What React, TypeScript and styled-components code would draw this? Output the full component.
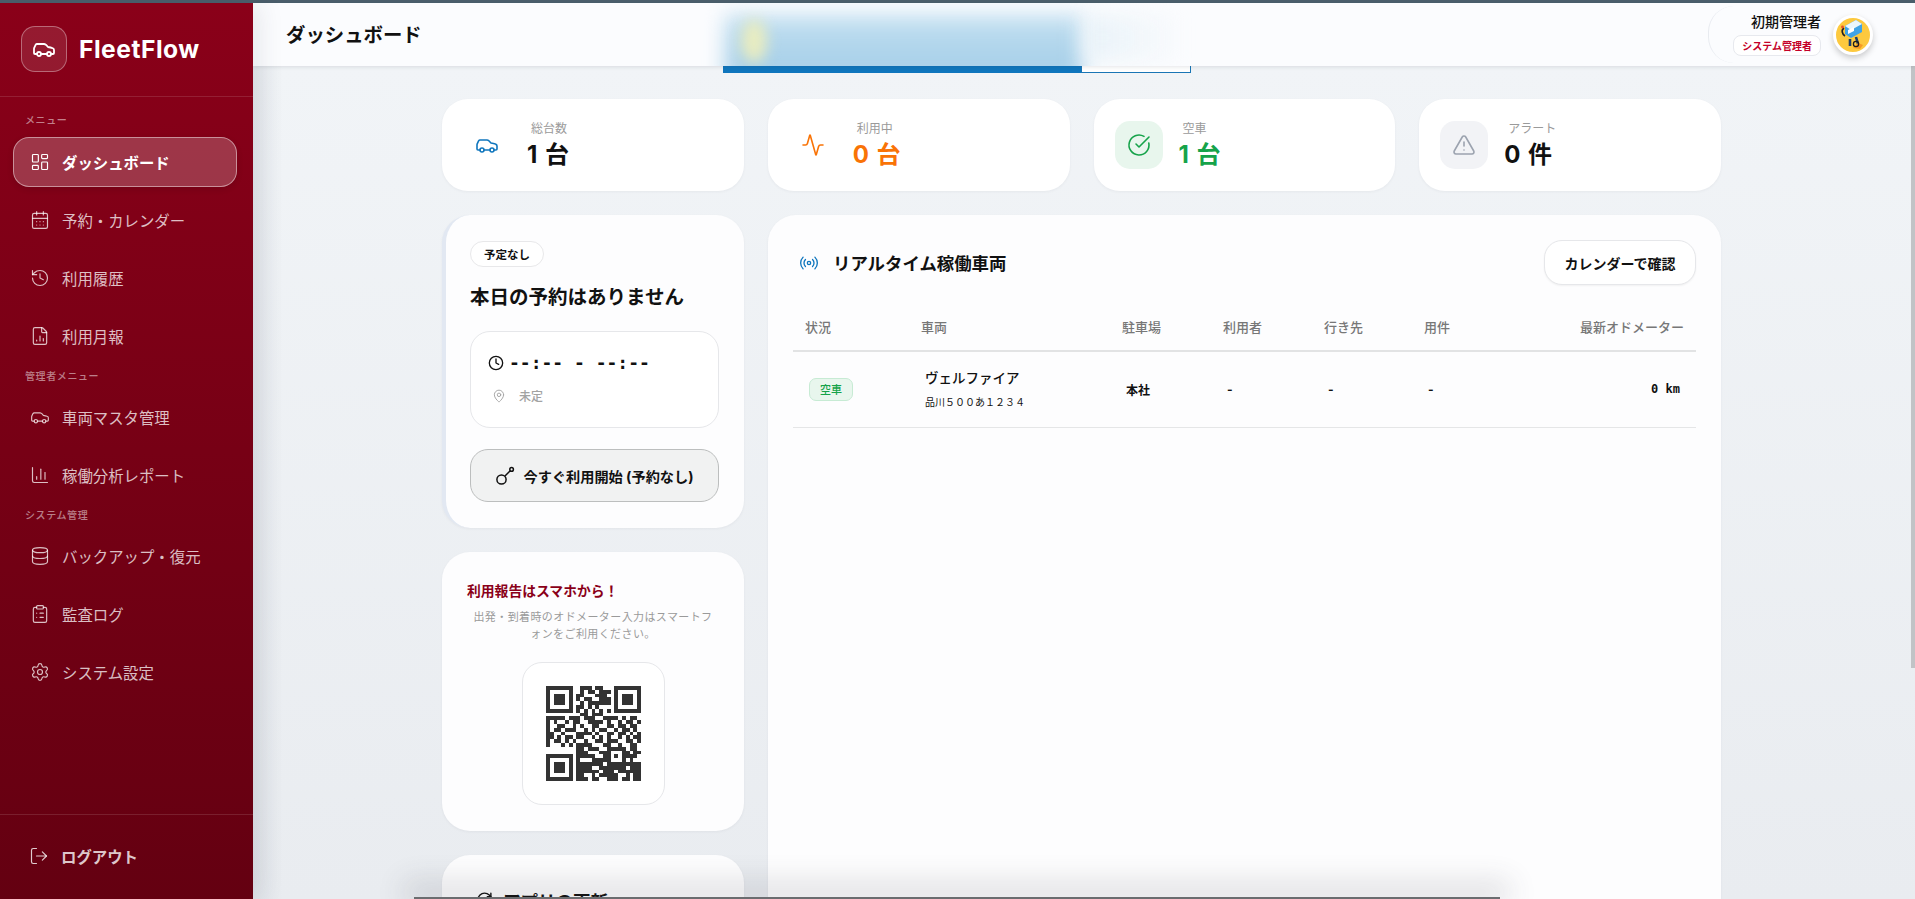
import React from "react";
import styled, { createGlobalStyle } from "styled-components";
import {
  Activity,
  Car,
  ChartColumn,
  CircleCheckBig,
  ClipboardList,
  Clock,
  CalendarDays,
  Database,
  FileChartColumn,
  History,
  LayoutDashboard,
  LogOut,
  MapPin,
  Radio,
  RefreshCw,
  Settings,
  TriangleAlert,
} from "lucide-react";

const GlobalStyle = createGlobalStyle`
  html, body {
    margin: 0;
    height: 100%;
    overflow: hidden;
    background: #f0f3f6;
    font-family: Inter, "Noto Sans CJK JP", sans-serif;
    color: #111;
  }
  * { box-sizing: border-box; }
`;

const Page = styled.div`
  position: relative;
  width: 100vw;
  height: 100vh;
  display: flex;
  flex-direction: column;
  overflow: hidden;
`;

const TopStrip = styled.div`
  height: 3px;
  flex: none;
  background: #4b5f6c;
`;

const Body = styled.div`
  flex: 1;
  min-height: 0;
  display: flex;
`;

const Sidebar = styled.aside`
  width: 253px;
  flex: none;
  display: flex;
  flex-direction: column;
  background: linear-gradient(180deg, #8a0019 0%, #640011 100%);
  position: relative;
  z-index: 3;
  box-shadow: 6px 0 24px rgba(40, 50, 70, 0.1);
`;

const Brand = styled.div`
  height: 94px;
  flex: none;
  padding: 0 21px 1px;
  display: flex;
  align-items: center;
  gap: 12px;
  border-bottom: 1px solid rgba(255, 255, 255, 0.12);
`;

const LogoBox = styled.div`
  width: 46px;
  height: 46px;
  border-radius: 14px;
  display: flex;
  align-items: center;
  justify-content: center;
  color: #fff;
  background: rgba(255, 255, 255, 0.1);
  border: 1px solid rgba(255, 255, 255, 0.35);
`;

const BrandName = styled.div`
  font-size: 24.6px;
  font-weight: 700;
  letter-spacing: 0.5px;
  color: #fff;
`;

const Nav = styled.nav`
  flex: 1;
  padding: 0 16px 0 13px;
  display: flex;
  flex-direction: column;
`;

const NavLabel = styled.div<{ $first?: boolean }>`
  height: ${(p) => (p.$first ? "40px" : "23px")};
  padding: ${(p) => (p.$first ? "16px" : "0")} 0 0 12px;
  font-size: 10px;
  line-height: 15px;
  font-weight: 500;
  letter-spacing: 0.6px;
  color: rgba(255, 255, 255, 0.5);
`;

const NavItem = styled.a<{ $active?: boolean }>`
  height: 50px;
  flex: none;
  margin-bottom: 8px;
  padding: 0 0 1px 16px;
  display: flex;
  align-items: center;
  gap: 12px;
  border-radius: 16px;
  font-size: 15.4px;
  font-weight: ${(p) => (p.$active ? 700 : 400)};
  color: ${(p) => (p.$active ? "#fff" : "rgba(255, 255, 255, 0.75)")};
  background: ${(p) => (p.$active ? "rgba(255, 255, 255, 0.21)" : "transparent")};
  border: 1px solid ${(p) => (p.$active ? "rgba(255, 255, 255, 0.45)" : "transparent")};
  box-shadow: ${(p) => (p.$active ? "0 2px 6px rgba(0, 0, 0, 0.12)" : "none")};
`;

const SidebarFoot = styled.div`
  height: 85px;
  flex: none;
  padding: 0 0 2px 29px;
  display: flex;
  align-items: center;
  gap: 12px;
  border-top: 1px solid rgba(255, 255, 255, 0.12);
  font-size: 15.4px;
  font-weight: 700;
  color: rgba(255, 255, 255, 0.8);
`;

const Main = styled.div`
  position: relative;
  flex: 1;
  min-width: 0;
  display: flex;
  flex-direction: column;
`;

const Header = styled.header`
  position: relative;
  z-index: 2;
  height: 63px;
  flex: none;
  padding: 0 42px 0 33px;
  display: flex;
  align-items: center;
  justify-content: space-between;
  background: #fbfcfe;
  box-shadow: 0 1px 4px rgba(30, 40, 60, 0.12);
`;

const PageTitle = styled.h1`
  position: relative;
  margin: 0 0 2px;
  font-size: 19.4px;
  font-weight: 700;
`;

const GlowClip = styled.div`
  position: absolute;
  inset: 0;
  overflow: hidden;
  pointer-events: none;
`;

const BlueGlow = styled.div`
  position: absolute;
  left: 472px;
  top: 12px;
  width: 358px;
  height: 70px;
  background: linear-gradient(180deg, #c4e0f1 0%, #abd2ea 60%, #a9d0e9 100%);
  filter: blur(10px);
`;

const YellowGlow = styled.div`
  position: absolute;
  left: 488px;
  top: 16px;
  width: 26px;
  height: 44px;
  border-radius: 50%;
  background: #e8ecc0;
  filter: blur(7px);
`;

const FadeGlow = styled.div`
  position: absolute;
  left: 832px;
  top: 12px;
  width: 100px;
  height: 46px;
  background: linear-gradient(90deg, #e8f2f8, rgba(251, 252, 254, 0));
  filter: blur(10px);
`;

const UserArea = styled.div`
  position: relative;
  height: 57px;
  padding-left: 24px;
  display: flex;
  align-items: center;
  gap: 12px;
  border-left: 1px solid #e8ebf0;
  border-radius: 26px;
`;

const UserText = styled.div`
  display: flex;
  flex-direction: column;
  align-items: flex-end;
  gap: 4px;
`;

const UserName = styled.div`
  font-size: 14px;
  line-height: 18px;
  font-weight: 500;
`;

const RoleBadge = styled.div`
  height: 21px;
  padding: 0 8px;
  display: flex;
  align-items: center;
  border: 1px solid #e7e9ee;
  border-radius: 8px;
  background: #fff;
  font-size: 10px;
  font-weight: 700;
  color: #c40028;
`;

const Avatar = styled.div`
  width: 40px;
  height: 40px;
  border-radius: 50%;
  border: 3px solid #fff;
  overflow: hidden;
  background: #fdc93e;
  box-shadow: 0 3px 6px rgba(0, 0, 0, 0.2);
`;

const Content = styled.main`
  position: relative;
  flex: 1;
  min-height: 0;
  overflow: hidden;
  padding: 33px 5px 0 0;
  background: linear-gradient(180deg, #f1f4f7 0%, #e9ecf0 100%);

  &::before {
    content: "";
    position: absolute;
    left: 0;
    top: 0;
    bottom: 0;
    width: 30px;
    background: linear-gradient(90deg, rgba(90, 100, 120, 0.07), transparent);
  }
`;

const BannerEdge = styled.div`
  position: absolute;
  top: 0;
  left: 470px;
  display: flex;
  height: 7px;
`;

const BannerBlue = styled.div`
  width: 358px;
  background: #0f76bd;
`;

const BannerWhite = styled.div`
  width: 110px;
  background: #fff;
  border: 1px solid #1a76b5;
  border-top: none;
`;

const Scrollbar = styled.div`
  position: absolute;
  top: 0;
  right: 0;
  width: 4px;
  height: 602px;
  background: #c1c3c6;
`;

const Inner = styled.div`
  width: 1279px;
  margin: 0 auto;
  position: relative;
  display: flex;
  flex-direction: column;
  gap: 24px;
`;

const StatGrid = styled.div`
  display: grid;
  grid-template-columns: repeat(4, 1fr);
  gap: 24px;
`;

const StatCard = styled.div`
  height: 92px;
  padding: 0 21px;
  display: flex;
  align-items: center;
  gap: 16px;
  border-radius: 26px;
  background: #fff;
  box-shadow: 0 1px 3px rgba(30, 40, 60, 0.05);
`;

const StatIcon = styled.div<{ $bg: string; $fg: string }>`
  width: 48px;
  height: 48px;
  flex: none;
  display: flex;
  align-items: center;
  justify-content: center;
  border-radius: 15px;
  background: ${(p) => p.$bg};
  color: ${(p) => p.$fg};
`;

const StatLabel = styled.div`
  margin-left: 4px;
  font-size: 12px;
  line-height: 16px;
  color: #9a9a9a;
`;

const StatValue = styled.div<{ $color: string }>`
  margin-top: 3px;
  font-size: 24px;
  line-height: 30px;
  font-weight: 700;
  word-spacing: 2px;
  color: ${(p) => p.$color};
`;

const Columns = styled.div`
  display: grid;
  grid-template-columns: 302px 953px;
  gap: 24px;
  align-items: start;
`;

const LeftColumn = styled.div`
  display: flex;
  flex-direction: column;
  gap: 24px;
`;

const Card = styled.section`
  border-radius: 28px;
  background: #fdfdfe;
  box-shadow: 0 1px 3px rgba(30, 40, 60, 0.05);
`;

const BookingCard = styled(Card)`
  padding: 26px 25px 26px 24px;
  border-left: 4px solid #e2e8f2;
`;

const Chip = styled.div`
  display: inline-flex;
  align-items: center;
  height: 26px;
  padding: 0 13px;
  border: 1px solid #e8e8ea;
  border-radius: 13px;
  background: #fff;
  font-size: 11.5px;
  font-weight: 700;
`;

const BookingTitle = styled.h2`
  margin: 16px 0 20px;
  font-size: 19.5px;
  line-height: 28px;
  font-weight: 700;
`;

const TimeBox = styled.div`
  height: 97px;
  padding: 0 17px 3px;
  display: flex;
  flex-direction: column;
  justify-content: center;
  gap: 13px;
  border: 1px solid #e6e7ea;
  border-radius: 20px;
  background: #fff;
`;

const TimeRow = styled.div`
  height: 22px;
  display: flex;
  align-items: center;
  gap: 5px;
  font-family: "DejaVu Sans Mono", "Liberation Mono", monospace;
  font-size: 18px;
  font-weight: 700;
`;

const PlaceRow = styled.div`
  height: 18px;
  padding-left: 4px;
  display: flex;
  align-items: center;
  gap: 13px;
  font-size: 12px;
  font-weight: 500;
  color: #a2a2a2;
`;

const StartButton = styled.button`
  width: 100%;
  height: 53px;
  margin-top: 21px;
  display: flex;
  align-items: center;
  justify-content: center;
  gap: 8px;
  border: 1px solid #bcbebe;
  border-radius: 18px;
  background: #f1f2f2;
  font-family: inherit;
  font-size: 14.2px;
  font-weight: 700;
  color: #111;
`;

const QrCard = styled(Card)`
  padding: 28px 25px 26px;
`;

const QrTitle = styled.h3`
  margin: 0 0 7px;
  font-size: 13.8px;
  line-height: 22px;
  font-weight: 700;
  color: #8a0019;
`;

const QrText = styled.p`
  margin: 0 0 19px;
  text-align: center;
  font-size: 11px;
  line-height: 17px;
  letter-spacing: 0.4px;
  white-space: nowrap;
  color: #9a9a9a;
`;

const QrBox = styled.div`
  width: 143px;
  height: 143px;
  margin: 0 auto;
  display: flex;
  align-items: center;
  justify-content: center;
  border: 1px solid #e6e7ea;
  border-radius: 20px;
  background: #fff;
`;

const UpdateCard = styled(Card)`
  height: 200px;
  padding: 36px 34px;
  display: flex;
  align-items: flex-start;
  gap: 10px;
  font-size: 17.5px;
  line-height: 22px;
  font-weight: 700;
`;

const VehiclePanel = styled(Card)`
  min-height: 760px;
  padding: 25px;
`;

const PanelHead = styled.div`
  display: flex;
  align-items: center;
  justify-content: space-between;
  margin-bottom: 21px;
`;

const PanelTitle = styled.h2`
  margin: 0;
  padding-left: 6px;
  display: flex;
  align-items: center;
  gap: 14px;
  font-size: 17.4px;
  font-weight: 700;
`;

const OutlineButton = styled.button`
  width: 152px;
  height: 45px;
  border: 1px solid #e6e7ea;
  border-radius: 18px;
  background: #fff;
  font-family: inherit;
  font-size: 14px;
  font-weight: 700;
  color: #111;
  box-shadow: 0 1px 2px rgba(0, 0, 0, 0.05);
`;

const Table = styled.table`
  width: 903px;
  table-layout: fixed;
  border-collapse: collapse;
`;

const Th = styled.th<{ $w?: number; $right?: boolean }>`
  width: ${(p) => (p.$w ? `${p.$w}px` : "auto")};
  height: 45px;
  padding: 0 12px 3px;
  text-align: ${(p) => (p.$right ? "right" : "left")};
  border-bottom: 2px solid #e2e3e4;
  font-size: 13px;
  font-weight: 500;
  color: #777;
`;

const Td = styled.td<{ $right?: boolean; $mono?: boolean }>`
  height: 76px;
  padding: 0 16px;
  text-align: ${(p) => (p.$right ? "right" : "left")};
  border-bottom: 1px solid #e5e6e7;
  font-family: ${(p) => (p.$mono ? '"DejaVu Sans Mono", monospace' : "inherit")};
  font-size: 12px;
  font-weight: 700;
`;

const StatusBadge = styled.span`
  display: inline-flex;
  align-items: center;
  justify-content: center;
  width: 44px;
  height: 23px;
  border: 1px solid #c7ebd4;
  border-radius: 7px;
  background: #e8f6ed;
  font-size: 11px;
  font-weight: 500;
  color: #16a34a;
`;

const VehicleName = styled.div`
  margin-top: -2px;
  font-size: 13.5px;
  line-height: 20px;
  font-weight: 500;
`;

const VehiclePlate = styled.div`
  margin-top: 7px;
  font-size: 10px;
  line-height: 14px;
  font-weight: 400;
`;

const BottomEdge = styled.div`
  position: absolute;
  z-index: 4;
  left: 414px;
  bottom: 0;
  width: 1086px;
  height: 2px;
  background: #6b6d70;
  box-shadow: 0 -6px 28px 10px rgba(60, 65, 75, 0.16);
`;

const navTop = [
  { icon: LayoutDashboard, label: "ダッシュボード", active: true },
  { icon: CalendarDays, label: "予約・カレンダー" },
  { icon: History, label: "利用履歴" },
  { icon: FileChartColumn, label: "利用月報" },
];
const navAdmin = [
  { icon: Car, label: "車両マスタ管理" },
  { icon: ChartColumn, label: "稼働分析レポート" },
];
const navSystem = [
  { icon: Database, label: "バックアップ・復元" },
  { icon: ClipboardList, label: "監査ログ" },
  { icon: Settings, label: "システム設定" },
];

const stats = [
  { icon: Car, label: "総台数", value: "1 台", color: "#111", bg: "transparent", fg: "#0f76bd" },
  { icon: Activity, label: "利用中", value: "0 台", color: "#f97306", bg: "transparent", fg: "#f97306" },
  { icon: CircleCheckBig, label: "空車", value: "1 台", color: "#16a34a", bg: "#e8f6ed", fg: "#16a34a" },
  { icon: TriangleAlert, label: "アラート", value: "0 件", color: "#111", bg: "#f2f3f6", fg: "#9ca3af" },
];

const qrRows = [
  "1111111001110110001111111",
  "1000001001011011101000001",
  "1011101011000111001011101",
  "1011101010110011101011101",
  "1011101001011111101011101",
  "1000001011010100001000001",
  "1111111010101010101111111",
  "0000000001101110000000000",
  "1111101110111001111010110",
  "1010010110011110100101101",
  "1001100101001100110110110",
  "1011011100101011001011010",
  "1100100011110100110110101",
  "1101011011001010100101011",
  "1011010100100110111001101",
  "1000101011110001100100110",
  "0000000011011100111110110",
  "0000000011100011100011011",
  "1111111011111001101011110",
  "1000001010001111100010100",
  "1011101011111110111111111",
  "1011101011110011111110111",
  "1011101011111101110111111",
  "1000001011001011111001011",
  "1111111011101100111011011",
];

const qrPath = qrRows
  .flatMap((row, y) =>
    row.split("").map((cell, x) => (cell === "1" ? `M${x} ${y}h1v1h-1z` : ""))
  )
  .join("");

const QrCode = () => (
  <svg width="95" height="95" viewBox="0 0 25 25" shapeRendering="crispEdges">
    <path d={qrPath} fill="#333" />
  </svg>
);

const KeyIcon = () => (
  <svg width="20" height="20" viewBox="0 0 20 20" fill="none" stroke="currentColor" strokeWidth="1.5">
    <circle cx="6.5" cy="13.5" r="4.6" />
    <path d="M10 10 L15.2 4.8" />
    <circle cx="16.6" cy="3.4" r="1.8" />
  </svg>
);

const AvatarArt = () => (
  <svg width="34" height="34" viewBox="0 0 34 34">
    <polygon points="9,8 20,2 26,6 26,14 15,20 9,16" fill="#3fa3e6" />
    <polygon points="9,8 20,2 26,6 15,12" fill="#eaf6fd" />
    <polygon points="12,12 18,9 18,13 12,16" fill="#ffffff" />
    <path d="M8 10 C5 12 6 16 9 18" stroke="#222" strokeWidth="1.6" fill="none" />
    <circle cx="6.5" cy="9" r="1.4" fill="#e8502a" />
    <path d="M14 21 L14 28 M20 19 L22 26" stroke="#1c3f6e" strokeWidth="2.6" fill="none" />
    <path d="M17 30 L24 31 L27 27 L22 25 Z" fill="#f59a23" />
    <circle cx="20" cy="26" r="2.6" fill="none" stroke="#1c1c1c" strokeWidth="1.3" />
  </svg>
);

const NavList = ({ items }: { items: typeof navTop }) => (
  <>
    {items.map((item) => (
      <NavItem key={item.label} $active={item.active}>
        <item.icon size={20} strokeWidth={1.4} />
        {item.label}
      </NavItem>
    ))}
  </>
);

export default function App() {
  return (
    <Page>
      <GlobalStyle />
      <TopStrip />
      <Body>
        <Sidebar>
          <Brand>
            <LogoBox>
              <Car size={24} strokeWidth={1.8} />
            </LogoBox>
            <BrandName>FleetFlow</BrandName>
          </Brand>
          <Nav>
            <NavLabel $first>メニュー</NavLabel>
            <NavList items={navTop} />
            <NavLabel>管理者メニュー</NavLabel>
            <NavList items={navAdmin} />
            <NavLabel>システム管理</NavLabel>
            <NavList items={navSystem} />
          </Nav>
          <SidebarFoot>
            <LogOut size={20} strokeWidth={1.4} />
            ログアウト
          </SidebarFoot>
        </Sidebar>

        <Main>
          <Header>
            <GlowClip>
              <BlueGlow />
              <YellowGlow />
              <FadeGlow />
            </GlowClip>
            <PageTitle>ダッシュボード</PageTitle>
            <UserArea>
              <UserText>
                <UserName>初期管理者</UserName>
                <RoleBadge>システム管理者</RoleBadge>
              </UserText>
              <Avatar>
                <AvatarArt />
              </Avatar>
            </UserArea>
          </Header>

          <Content>
            <BannerEdge>
              <BannerBlue />
              <BannerWhite />
            </BannerEdge>
            <Scrollbar />
            <Inner>
              <StatGrid>
                {stats.map((s) => (
                  <StatCard key={s.label}>
                    <StatIcon $bg={s.bg} $fg={s.fg}>
                      <s.icon size={24} strokeWidth={1.6} />
                    </StatIcon>
                    <div>
                      <StatLabel>{s.label}</StatLabel>
                      <StatValue $color={s.color}>{s.value}</StatValue>
                    </div>
                  </StatCard>
                ))}
              </StatGrid>

              <Columns>
                <LeftColumn>
                  <BookingCard>
                    <Chip>予定なし</Chip>
                    <BookingTitle>本日の予約はありません</BookingTitle>
                    <TimeBox>
                      <TimeRow>
                        <Clock size={16} strokeWidth={2} />
                        --:-- - --:--
                      </TimeRow>
                      <PlaceRow>
                        <MapPin size={14} strokeWidth={1.6} />
                        未定
                      </PlaceRow>
                    </TimeBox>
                    <StartButton>
                      <KeyIcon />
                      今すぐ利用開始 (予約なし)
                    </StartButton>
                  </BookingCard>

                  <QrCard>
                    <QrTitle>利用報告はスマホから！</QrTitle>
                    <QrText>
                      出発・到着時のオドメーター入力はスマートフ
                      <br />
                      ォンをご利用ください。
                    </QrText>
                    <QrBox>
                      <QrCode />
                    </QrBox>
                  </QrCard>

                  <UpdateCard>
                    <RefreshCw size={17} strokeWidth={2} />
                    アプリの更新
                  </UpdateCard>
                </LeftColumn>

                <VehiclePanel>
                  <PanelHead>
                    <PanelTitle>
                      <Radio size={20} strokeWidth={1.6} color="#0f76bd" />
                      リアルタイム稼働車両
                    </PanelTitle>
                    <OutlineButton>カレンダーで確認</OutlineButton>
                  </PanelHead>
                  <Table>
                    <thead>
                      <tr>
                        <Th $w={116}>状況</Th>
                        <Th $w={201}>車両</Th>
                        <Th $w={101}>駐車場</Th>
                        <Th $w={101}>利用者</Th>
                        <Th $w={100}>行き先</Th>
                        <Th $w={100}>用件</Th>
                        <Th $right>最新オドメーター</Th>
                      </tr>
                    </thead>
                    <tbody>
                      <tr>
                        <Td>
                          <StatusBadge>空車</StatusBadge>
                        </Td>
                        <Td>
                          <VehicleName>ヴェルファイア</VehicleName>
                          <VehiclePlate>品川５００あ１２３４</VehiclePlate>
                        </Td>
                        <Td>本社</Td>
                        <Td>-</Td>
                        <Td>-</Td>
                        <Td>-</Td>
                        <Td $right $mono>
                          0 km
                        </Td>
                      </tr>
                    </tbody>
                  </Table>
                </VehiclePanel>
              </Columns>
            </Inner>
          </Content>
        </Main>
      </Body>
      <BottomEdge />
    </Page>
  );
}
